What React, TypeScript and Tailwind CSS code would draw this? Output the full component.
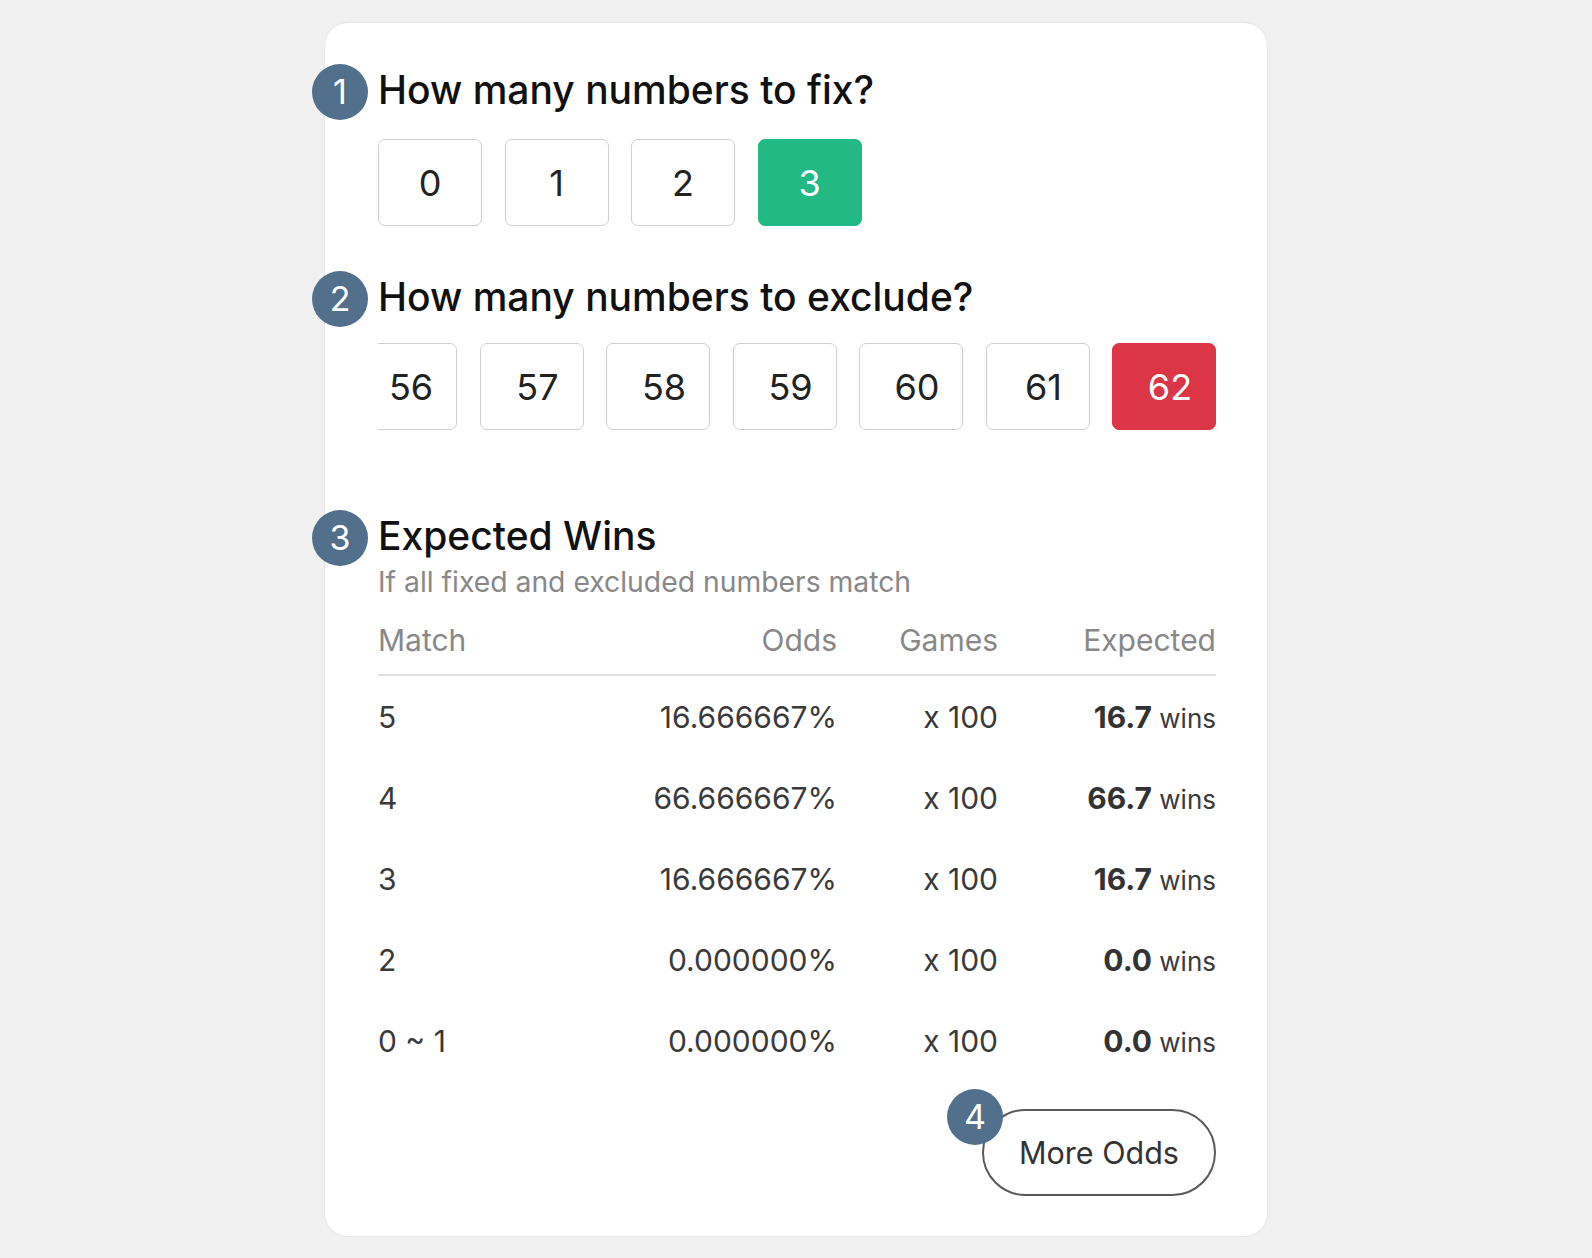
import React from 'react'

const fixOptions = [0, 1, 2, 3]
const excludeOptions = [56, 57, 58, 59, 60, 61, 62]

const rows = [
  { match: '5', odds: '16.666667%', games: 'x 100', expected: '16.7' },
  { match: '4', odds: '66.666667%', games: 'x 100', expected: '66.7' },
  { match: '3', odds: '16.666667%', games: 'x 100', expected: '16.7' },
  { match: '2', odds: '0.000000%', games: 'x 100', expected: '0.0' },
  { match: '0 ~ 1', odds: '0.000000%', games: 'x 100', expected: '0.0' },
]

function StepBadge({ n, className }: { n: number; className: string }) {
  return (
    <span
      className={`absolute w-[56px] h-[56px] rounded-full bg-[#52708c] text-white text-[34px] leading-none flex items-center justify-center ${className}`}
    >
      {n}
    </span>
  )
}

function SectionTitle({ n, children }: { n: number; children: React.ReactNode }) {
  return (
    <div className="relative h-[56px] flex items-center">
      <StepBadge n={n} className="left-[-66px] top-0" />
      <h2 className="text-[39px] font-medium text-[#111] leading-[52px] pb-[5px] whitespace-nowrap">{children}</h2>
    </div>
  )
}

function NumButton({ value, active, color, shifted }: { value: number; active?: boolean; color?: 'green' | 'red'; shifted?: boolean }) {
  const activeCls = color === 'red' ? 'bg-[#dc3545] border-[#dc3545] text-white' : 'bg-[#22b985] border-[#22b985] text-white'
  return (
    <button
      type="button"
      className={[
        'shrink-0 w-[104px] h-[87px] rounded-[7px] border-[1.5px] text-[36px] flex items-center justify-center',
        shifted ? 'pl-[12px]' : '',
        active ? activeCls : 'bg-white border-[#cfcfcf] text-[#222]',
      ].join(' ')}
    >
      {value}
    </button>
  )
}

export default function App() {
  return (
    <div className="min-h-screen bg-[#f0f0f0] flex justify-center pt-[22px] pb-[23px] font-['Inter','Noto_Sans',sans-serif]">
      <div className="w-[944px] bg-white rounded-[24px] border border-[#e6e6e6] pl-[53px] pr-[51px] pt-[41px] pb-[40px]">
        {/* 1. fix */}
        <SectionTitle n={1}>How many numbers to fix?</SectionTitle>
        <div className="mt-[19px] flex gap-[22.5px]">
          {fixOptions.map((v) => (
            <NumButton key={v} value={v} active={v === 3} color="green" />
          ))}
        </div>

        {/* 2. exclude */}
        <div className="mt-[45px]">
          <SectionTitle n={2}>How many numbers to exclude?</SectionTitle>
        </div>
        <div className="mt-[16px] flex justify-end gap-[22.5px] overflow-hidden">
          {excludeOptions.map((v) => (
            <NumButton key={v} value={v} active={v === 62} color="red" shifted />
          ))}
        </div>

        {/* 3. expected wins */}
        <div className="mt-[80px]">
          <SectionTitle n={3}>Expected Wins</SectionTitle>
        </div>
        <p className="text-[28.3px] leading-[32px] text-[#888]">If all fixed and excluded numbers match</p>

        <div className="mt-[22px]">
          <div className="grid grid-cols-[1fr_200px_161px_218px] text-[30px] leading-[40px] text-[#888] pb-[14px] border-b-2 border-[#e0e0e0]">
            <div>Match</div>
            <div className="text-right">Odds</div>
            <div className="text-right">Games</div>
            <div className="text-right">Expected</div>
          </div>
          <div className="pt-[1px]">
            {rows.map((r) => (
              <div
                key={r.match}
                className="grid grid-cols-[1fr_200px_161px_218px] h-[81px] items-center text-[30px] text-[#3a3a3a]"
              >
                <div>{r.match}</div>
                <div className="text-right">{r.odds}</div>
                <div className="text-right">{r.games}</div>
                <div className="text-right">
                  <span className="font-bold text-[#333]">{r.expected}</span>
                  <span className="text-[26px]"> wins</span>
                </div>
              </div>
            ))}
          </div>
        </div>

        {/* 4. more odds */}
        <div className="mt-[27px] flex justify-end">
          <div className="relative">
            <StepBadge n={4} className="left-[-35px] top-[-20px] z-10" />
            <button
              type="button"
              className="w-[234px] h-[87px] rounded-full border-2 border-[#5a5a5a] bg-white text-[30.5px] text-[#333]"
            >
              More Odds
            </button>
          </div>
        </div>
      </div>
    </div>
  )
}
